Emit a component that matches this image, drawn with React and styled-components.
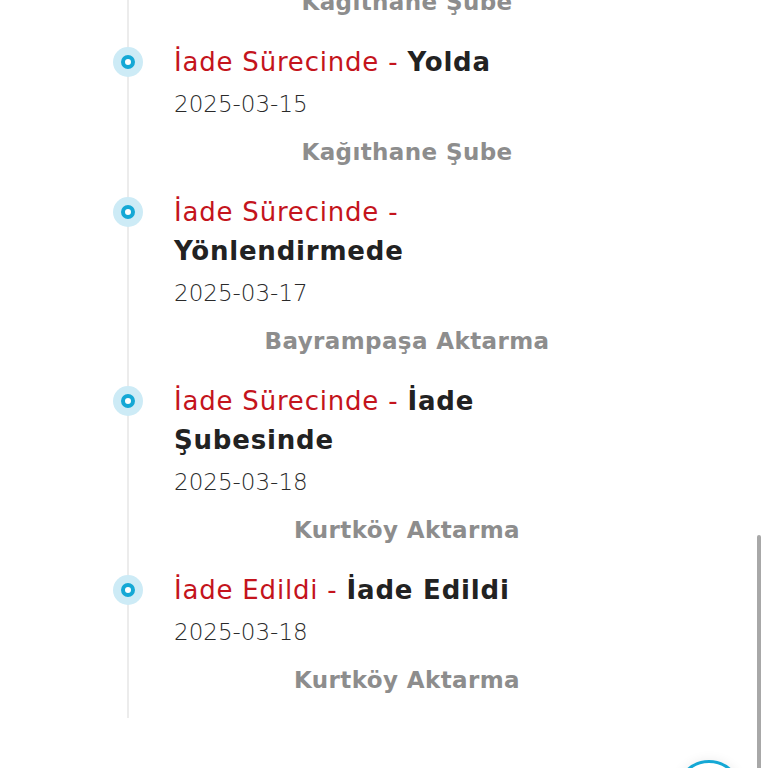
import React from 'react';
import styled, { createGlobalStyle } from 'styled-components';

const GlobalStyle = createGlobalStyle`
	html, body {
		margin: 0;
		padding: 0;
		background: #fff;
	}
	body {
		font-family: 'DejaVu Sans', 'Noto Sans', sans-serif;
		color: #222;
	}
`;

const Page = styled.div`
	position: relative;
	height: 768px;
	overflow: hidden;
`;

const Timeline = styled.ul`
	list-style: none;
	margin: -107px 0 0 127px;
	padding: 0 0 22px 45px;
	width: 466px;
	border-left: 2px solid #ececec;

	display: flex;
	flex-direction: column;
	gap: 25px;
`;

const Item = styled.li`
	position: relative;
	display: flex;
	flex-direction: column;
`;

const Dot = styled.span`
	position: absolute;
	left: -61px;
	top: 4px;
	width: 30px;
	height: 30px;
	border-radius: 50%;
	background: #cdebf6;
	display: flex;
	align-items: center;
	justify-content: center;

	&::after {
		content: '';
		width: 6px;
		height: 6px;
		border-radius: 50%;
		border: 4px solid #15a8d5;
		background: #fff;
	}
`;

const Title = styled.div`
	max-width: 420px;
	font-size: 26px;
	line-height: 39px;
	letter-spacing: 0.8px;
	font-weight: 700;
	color: #222;

	span {
		font-weight: 400;
		color: #c4141c;
	}
`;

const Date = styled.div`
	margin-top: 6px;
	font-size: 23px;
	line-height: 32px;
	font-weight: 300;
	color: #2a2a2a;
`;

const Location = styled.div`
	margin-top: 16px;
	font-size: 23px;
	line-height: 32px;
	letter-spacing: 0.4px;
	font-weight: 700;
	color: #8d8d8d;
	text-align: center;
`;

const Scrollbar = styled.div`
	position: absolute;
	right: 7px;
	top: 535px;
	width: 4px;
	height: 240px;
	border-radius: 2px;
	background: #a8a8a8;
`;

const Fab = styled.button`
	position: absolute;
	left: 676px;
	top: 760px;
	width: 66px;
	height: 66px;
	border-radius: 50%;
	border: 3px solid #15a8d5;
	background: #fff;
	box-shadow: 0 0 12px rgba(0, 0, 0, 0.08);
`;

const steps = [
	{ status: 'İade Sürecinde', detail: 'Yolda', date: '2025-03-14', place: 'Kağıthane Şube' },
	{ status: 'İade Sürecinde', detail: 'Yolda', date: '2025-03-15', place: 'Kağıthane Şube' },
	{ status: 'İade Sürecinde', detail: 'Yönlendirmede', date: '2025-03-17', place: 'Bayrampaşa Aktarma' },
	{ status: 'İade Sürecinde', detail: 'İade Şubesinde', date: '2025-03-18', place: 'Kurtköy Aktarma' },
	{ status: 'İade Edildi', detail: 'İade Edildi', date: '2025-03-18', place: 'Kurtköy Aktarma' },
];

const App = () => {
	return (
		<Page>
			<GlobalStyle />
			<Timeline>
				{steps.map((s, i) => (
					<Item key={i}>
						<Dot />
						<Title>
							<span>{s.status} - </span>
							{s.detail}
						</Title>
						<Date>{s.date}</Date>
						<Location>{s.place}</Location>
					</Item>
				))}
			</Timeline>
			<Scrollbar />
			<Fab aria-label='Destek' />
		</Page>
	);
};

export default App;
